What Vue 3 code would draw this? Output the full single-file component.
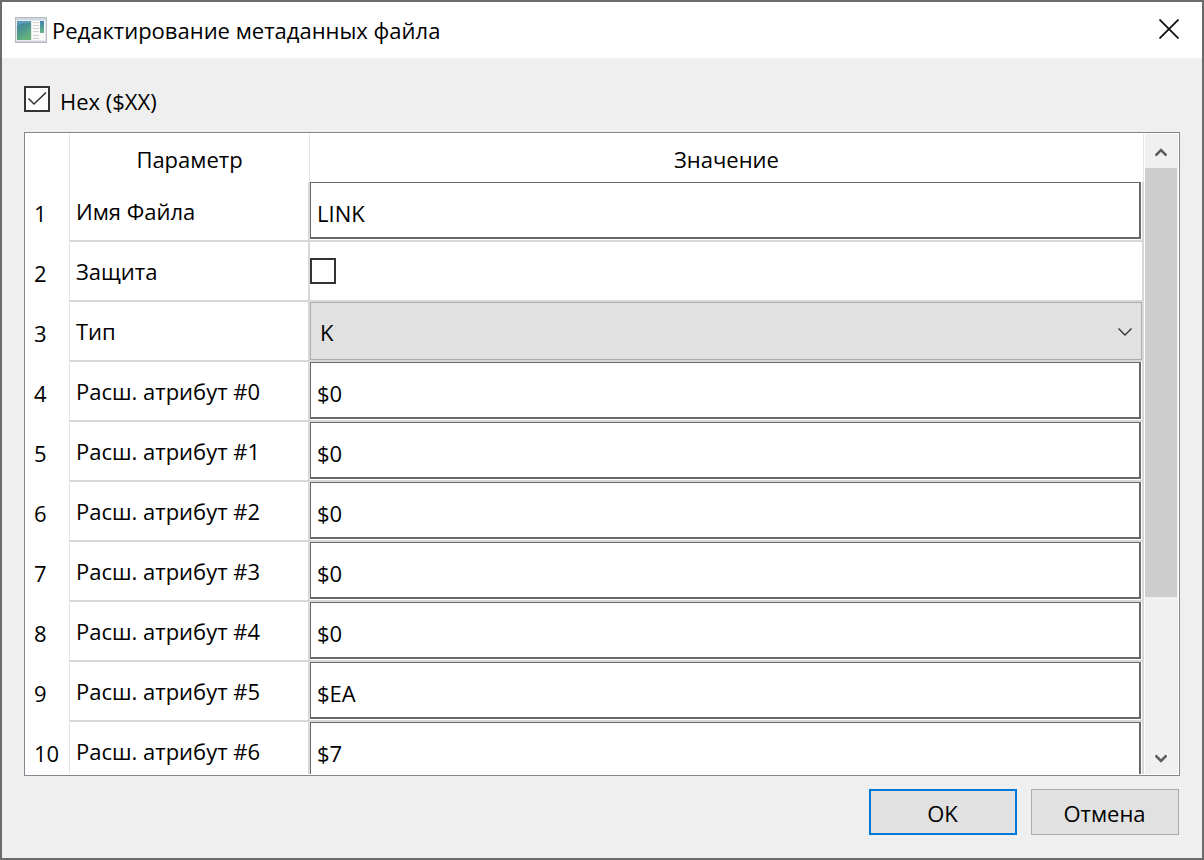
<script setup>
import { ref } from 'vue'

const hex = ref(true)
const rows = ref([
  { label: 'Имя Файла', kind: 'text', value: 'LINK' },
  { label: 'Защита', kind: 'check', value: false },
  { label: 'Тип', kind: 'select', value: 'K' },
  ...['$0', '$0', '$0', '$0', '$0', '$EA', '$7'].map((value, i) => ({
    label: `Расш. атрибут #${i}`,
    kind: 'text',
    value,
  })),
])
</script>

<template>
  <div class="window">
    <header class="titlebar">
      <svg class="app-icon" width="32" height="26" viewBox="0 0 32 26" aria-hidden="true">
        <defs>
          <linearGradient id="pane" x1="0" y1="0" x2="0.5" y2="1">
            <stop offset="0" stop-color="#3f7ba6" />
            <stop offset="0.5" stop-color="#4a9690" />
            <stop offset="1" stop-color="#68b27c" />
          </linearGradient>
          <linearGradient id="strip" x1="0" y1="0" x2="0" y2="1">
            <stop offset="0" stop-color="#4180b0" />
            <stop offset="1" stop-color="#69b584" />
          </linearGradient>
        </defs>
        <rect x="0.5" y="0.5" width="31" height="25" fill="#e6e9ec" stroke="#b4bac0" />
        <rect x="1" y="1" width="30" height="2" fill="#ced8e2" />
        <rect x="2" y="4" width="14" height="19" fill="url(#pane)" />
        <path d="M2 9 Q8 5 16 6 L16 4 L2 4Z" fill="#5f9cba" />
        <rect x="17" y="4" width="13" height="19" fill="#fafafa" />
        <path d="M18 5.500h6M18 8.500h6M18 11.500h6M18 14.500h6M18 18.500h6M18 21.500h6" stroke="#cfd1d4" />
        <rect x="25" y="4" width="4" height="12" fill="url(#strip)" />
        <path d="M1 24.500h30" stroke="#cfd3d7" />
      </svg>
      <h1>Редактирование метаданных файла</h1>
      <button class="close" type="button" aria-label="Закрыть">
        <svg width="20" height="20" viewBox="0 0 20 20"><path d="M0.500 0.500L19.500 19.500M19.500 0.500L0.500 19.500" stroke="#111" stroke-width="1.800" /></svg>
      </button>
    </header>

    <main class="body">
      <label class="hex">
        <input v-model="hex" class="check" type="checkbox" />
        <span>Hex ($XX)</span>
      </label>

      <div class="frame">
        <div class="viewport">
          <table>
            <colgroup><col class="c-num" /><col class="c-name" /><col /></colgroup>
            <thead>
              <tr><th></th><th scope="col">Параметр</th><th scope="col">Значение</th></tr>
            </thead>
            <tbody>
              <tr v-for="(row, i) in rows" :key="i">
                <th scope="row">{{ i + 1 }}</th>
                <td class="name"><label :for="`field-${i}`">{{ row.label }}</label></td>
                <td class="value">
                  <input v-if="row.kind === 'text'" :id="`field-${i}`" v-model="row.value" class="text" type="text" />
                  <input v-else-if="row.kind === 'check'" :id="`field-${i}`" v-model="row.value" class="check" type="checkbox" />
                  <div v-else class="combo">
                    <select :id="`field-${i}`" v-model="row.value"><option>K</option></select>
                    <svg width="14" height="8" viewBox="0 0 14 8" aria-hidden="true"><path d="M0.500 0.500L7 7L13.500 0.500" fill="none" stroke="#333" stroke-width="1.400" /></svg>
                  </div>
                </td>
              </tr>
            </tbody>
          </table>
        </div>
        <div class="scrollbar">
          <button type="button" aria-label="Вверх">
            <svg width="12" height="9" viewBox="0 0 12 9"><path d="M0.500 7.500L6 2L11.500 7.500" fill="none" stroke="#5d5d5d" stroke-width="2.600" /></svg>
          </button>
          <div class="track"><div class="thumb"></div></div>
          <button type="button" aria-label="Вниз">
            <svg width="12" height="9" viewBox="0 0 12 9"><path d="M0.500 1.500L6 7L11.500 1.500" fill="none" stroke="#5d5d5d" stroke-width="2.600" /></svg>
          </button>
        </div>
      </div>

      <footer class="actions">
        <button class="default" type="button">OK</button>
        <button type="button">Отмена</button>
      </footer>
    </main>
  </div>
</template>

<style>
body {
  margin: 0;
}
</style>

<style scoped>
.window,
.window * {
  box-sizing: border-box;
}
.window {
  display: flex;
  flex-direction: column;
  height: 100vh;
  border: 2px solid #6b6b6b;
  background: #efefef;
  color: #000;
  font: 22px/32px "Open Sans", "Noto Sans", sans-serif;
}
button,
input,
select {
  margin: 0;
  font: inherit;
  color: inherit;
  border-radius: 0;
}
.titlebar {
  display: flex;
  align-items: center;
  flex: none;
  height: 56px;
  padding: 0 23px 0 13px;
  background: #fff;
}
.app-icon {
  flex: none;
  margin-right: 5px;
}
h1 {
  flex: 1;
  margin: 0;
  font: inherit;
}
.close {
  display: flex;
  padding: 0 0 2px;
  border: 0;
  background: none;
}
.body {
  display: flex;
  flex: 1;
  flex-direction: column;
  min-height: 0;
  padding: 25px 22px 23px;
}
.hex {
  display: flex;
  align-items: center;
  align-self: flex-start;
  gap: 10px;
  height: 32px;
  margin-bottom: 17px;
}
.hex span {
  padding-top: 4px;
}
.check {
  appearance: none;
  display: block;
  width: 26px;
  height: 26px;
  border: 2px solid #333;
  background: #fff;
}
.check:checked {
  background: #fff url("data:image/svg+xml,%3Csvg xmlns='http://www.w3.org/2000/svg' viewBox='0 0 22 22'%3E%3Cpath d='M2.500 10.500L8 16L20 4.500' fill='none' stroke='%23333' stroke-width='1.600'/%3E%3C/svg%3E");
}
.frame {
  display: flex;
  flex: 1;
  min-height: 0;
  padding: 1px;
  border: 1px solid #828790;
  background: #fff;
}
.viewport {
  flex: 1;
  min-width: 0;
  overflow: hidden;
}
table {
  width: 100%;
  table-layout: fixed;
  border-collapse: separate;
  border-spacing: 0;
}
.c-num {
  width: 44px;
}
.c-name {
  width: 240px;
}
th {
  font-weight: 400;
}
thead th {
  height: 48px;
  padding: 2px 0 0;
  border-right: 1px solid #e5e5e5;
}
tbody th {
  height: 60px;
  padding: 2px 0 0 8px;
  border-right: 1px solid #e5e5e5;
  text-align: left;
}
td {
  height: 60px;
  padding: 0;
  border: solid #d8d8d8;
  border-width: 0 2px 2px 0;
}
.name {
  padding-left: 6px;
}
.text {
  display: block;
  width: calc(100% - 1px);
  height: 57px;
  margin-bottom: 1px;
  padding: 6px 6px 0;
  border: solid #696969;
  border-width: 1px 2px 2px 1px;
  outline: 0;
  background: #fff;
}
.combo {
  position: relative;
}
.combo select {
  appearance: none;
  display: block;
  width: 100%;
  height: 58px;
  padding: 2px 40px 0 9px;
  border: 1px solid #adadad;
  background: #e1e1e1;
}
.combo svg {
  position: absolute;
  top: 26px;
  right: 10px;
  pointer-events: none;
}
.scrollbar {
  display: flex;
  flex: none;
  flex-direction: column;
  width: 33px;
  margin-left: 1px;
  background: #f0f0f0;
}
.scrollbar button {
  display: flex;
  align-items: center;
  justify-content: center;
  flex: none;
  height: 34px;
  padding: 2px 1px 0 0;
  border: 0;
  background: none;
}
.track {
  flex: 1;
}
.thumb {
  width: 32px;
  height: 75%;
  background: #cdcdcd;
}
.actions {
  display: flex;
  justify-content: flex-end;
  gap: 14px;
  padding: 13px 1px 0 0;
}
.actions button {
  width: 148px;
  height: 46px;
  padding: 2px 1px 0 0;
  border: 1px solid #adadad;
  background: #e1e1e1;
}
.actions .default {
  border: 2px solid #0078d7;
}
</style>
